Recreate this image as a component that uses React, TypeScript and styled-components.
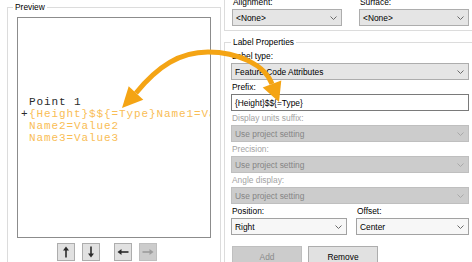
import React from 'react'
import styled, { createGlobalStyle } from 'styled-components'

const GlobalStyle = createGlobalStyle`
  html, body {
    margin: 0;
    padding: 0;
    background: #ffffff;
  }
  body {
    font-family: 'Liberation Sans', Arial, sans-serif;
    font-size: 8.4px;
    color: #000000;
  }
`

const Dialog = styled.div`
  position: relative;
  display: flex;
  width: 472px;
  height: 262px;
  overflow: hidden;
  background: #ffffff;
`

const LeftCol = styled.div`
  flex: 0 0 auto;
  padding: 7px 0 0 7px;
`

const RightCol = styled.div`
  flex: 1 1 auto;
  min-width: 0;
  margin-left: 3px;
  display: flex;
  flex-direction: column;
`

const GroupBox = styled.div`
  position: relative;
  box-sizing: border-box;
  border: 1px solid #dcdcdc;
`

const GroupTitle = styled.span<{ $left: number }>`
  position: absolute;
  top: -6px;
  left: ${p => p.$left}px;
  padding: 0 2px;
  background: #ffffff;
  line-height: 10px;
  white-space: nowrap;
`

const PreviewGroup = styled(GroupBox)`
  width: 214px;
  height: 280px;
  padding: 9px 0 0 9px;
`

const Canvas = styled.div`
  box-sizing: border-box;
  width: 194px;
  height: 221px;
  border: 1px solid #8c8c8c;
  overflow: hidden;
  padding: 78px 0 0 11px;
  font-family: 'Liberation Mono', 'DejaVu Sans Mono', monospace;
  font-size: 11px;
  letter-spacing: 0.9px;
  line-height: 12px;
  white-space: nowrap;
`

const PointName = styled.div`
  color: #2a2a2a;
`

const LabelLine = styled.div`
  color: #f9bd55;
`

const Marker = styled.span`
  display: inline-block;
  width: 8px;
  margin-left: -8px;
  color: #2a2a2a;
`

const NudgeRow = styled.div`
  display: flex;
  gap: 14px;
  margin: 5px 0 0 40px;
`

const NudgePair = styled.div`
  display: flex;
  gap: 7px;
`

const NudgeButton = styled.div<{ $disabled?: boolean }>`
  box-sizing: border-box;
  width: 18px;
  height: 18px;
  display: flex;
  align-items: center;
  justify-content: center;
  background: ${p => (p.$disabled ? '#cccccc' : '#e1e1e1')};
  border: 1px solid ${p => (p.$disabled ? '#bfbfbf' : '#adadad')};
  color: ${p => (p.$disabled ? '#9c9c9c' : '#2b2b2b')};
`

const UpperGroup = styled(GroupBox)`
  margin: -6px -10px 0 0;
  padding: 0 0 4px 7px;
`

const PropsGroup = styled(GroupBox)`
  flex: 1 1 auto;
  margin: 11px -10px -20px 0;
  padding: 6px 0 0 6px;
`

const FieldRow = styled.div<{ $gap: number }>`
  display: flex;
  gap: ${p => p.$gap}px;
`

const Field = styled.div<{ $width: number }>`
  display: flex;
  flex-direction: column;
  width: ${p => p.$width}px;
`

const FieldLabel = styled.div<{ $disabled?: boolean }>`
  height: 14px;
  line-height: 14px;
  padding-left: 1px;
  white-space: nowrap;
  color: ${p => (p.$disabled ? '#a3a3a3' : '#000000')};
`

type ComboKind = 'list' | 'edit' | 'disabled'

const comboBg: Record<ComboKind, string> = {
  list: '#e5e5e5',
  edit: '#f7f7f7',
  disabled: '#cccccc',
}

const comboBorder: Record<ComboKind, string> = {
  list: '#adadad',
  edit: '#a2a2a2',
  disabled: '#bfbfbf',
}

const ComboBox = styled.div<{ $kind: ComboKind }>`
  box-sizing: border-box;
  height: 17px;
  display: flex;
  align-items: center;
  justify-content: space-between;
  padding: 0 4px 0 3px;
  background: ${p => comboBg[p.$kind]};
  border: 1px solid ${p => comboBorder[p.$kind]};
  color: ${p => (p.$kind === 'disabled' ? '#858585' : '#000000')};
  white-space: nowrap;
`

const Chevron = styled.svg<{ $disabled?: boolean }>`
  flex: 0 0 auto;
  color: ${p => (p.$disabled ? '#a9a9a9' : '#6a6a6a')};
`

const TextBox = styled.div`
  box-sizing: border-box;
  height: 17px;
  display: flex;
  align-items: center;
  padding: 0 3px;
  background: #ffffff;
  border: 1px solid #7a7a7a;
  white-space: nowrap;
`

const ButtonRow = styled.div`
  display: flex;
  gap: 6px;
  margin: 11px 0 0 1px;
`

const PushButton = styled.div<{ $disabled?: boolean }>`
  box-sizing: border-box;
  width: 70px;
  height: 21px;
  display: flex;
  align-items: center;
  justify-content: center;
  background: ${p => (p.$disabled ? '#cccccc' : '#e1e1e1')};
  border: 1px solid ${p => (p.$disabled ? '#bfbfbf' : '#adadad')};
  color: ${p => (p.$disabled ? '#8a8a8a' : '#000000')};
`

const Overlay = styled.svg`
  position: absolute;
  top: 0;
  left: 0;
  pointer-events: none;
`

const Combo = (props: { value: string; kind?: ComboKind }) => {
  const kind = props.kind || 'list'
  return (
    <ComboBox $kind={kind}>
      <span>{props.value}</span>
      <Chevron $disabled={kind === 'disabled'} width="7" height="4" viewBox="0 0 7 4">
        <polyline points="0.5,0.5 3.5,3.5 6.5,0.5" fill="none" stroke="currentColor" strokeWidth="1" />
      </Chevron>
    </ComboBox>
  )
}

const ArrowIcon = (props: { dir: 'up' | 'down' | 'left' | 'right' }) => {
  const rotate = { up: 0, right: 90, down: 180, left: 270 }[props.dir]
  return (
    <svg width="12" height="12" viewBox="0 0 12 12">
      <g transform={`rotate(${rotate} 6 6)`}>
        <line x1="6" y1="3" x2="6" y2="11.5" stroke="currentColor" strokeWidth="1.6" />
        <polygon points="3,4.5 6,0.5 9,4.5" fill="currentColor" />
      </g>
    </svg>
  )
}

const App = () => {
  return (
    <Dialog>
      <GlobalStyle />
      <LeftCol>
        <PreviewGroup>
          <GroupTitle $left={5}>Preview</GroupTitle>
          <Canvas>
            <PointName>Point 1</PointName>
            <LabelLine>
              <Marker>+</Marker>
              {'{Height}$${=Type}Name1=Value1'}
            </LabelLine>
            <LabelLine>Name2=Value2</LabelLine>
            <LabelLine>Name3=Value3</LabelLine>
          </Canvas>
          <NudgeRow>
            <NudgePair>
              <NudgeButton>
                <ArrowIcon dir="up" />
              </NudgeButton>
              <NudgeButton>
                <ArrowIcon dir="down" />
              </NudgeButton>
            </NudgePair>
            <NudgePair>
              <NudgeButton>
                <ArrowIcon dir="left" />
              </NudgeButton>
              <NudgeButton $disabled>
                <ArrowIcon dir="right" />
              </NudgeButton>
            </NudgePair>
          </NudgeRow>
        </PreviewGroup>
      </LeftCol>

      <RightCol>
        <UpperGroup>
          <FieldRow $gap={17}>
            <Field $width={110}>
              <FieldLabel>Alignment:</FieldLabel>
              <Combo value="<None>" />
            </Field>
            <Field $width={110}>
              <FieldLabel>Surface:</FieldLabel>
              <Combo value="<None>" />
            </Field>
          </FieldRow>
        </UpperGroup>

        <PropsGroup>
          <GroupTitle $left={6}>Label Properties</GroupTitle>
          <Field $width={238}>
            <FieldLabel>Label type:</FieldLabel>
            <Combo value="Feature Code Attributes" />
          </Field>
          <Field $width={238}>
            <FieldLabel>Prefix:</FieldLabel>
            <TextBox>{'{Height}$${=Type}'}</TextBox>
          </Field>
          <Field $width={238}>
            <FieldLabel $disabled>Display units suffix:</FieldLabel>
            <Combo value="Use project setting" kind="disabled" />
          </Field>
          <Field $width={238}>
            <FieldLabel $disabled>Precision:</FieldLabel>
            <Combo value="Use project setting" kind="disabled" />
          </Field>
          <Field $width={238}>
            <FieldLabel $disabled>Angle display:</FieldLabel>
            <Combo value="Use project setting" kind="disabled" />
          </Field>
          <FieldRow $gap={9}>
            <Field $width={116}>
              <FieldLabel>Position:</FieldLabel>
              <Combo value="Right" kind="edit" />
            </Field>
            <Field $width={113}>
              <FieldLabel>Offset:</FieldLabel>
              <Combo value="Center" kind="edit" />
            </Field>
          </FieldRow>
          <ButtonRow>
            <PushButton $disabled>Add</PushButton>
            <PushButton>Remove</PushButton>
          </ButtonRow>
        </PropsGroup>
      </RightCol>

      <Overlay width="472" height="262" viewBox="0 0 472 262">
        <path
          d="M 136 93 C 158 66, 180 52, 208 52 C 238 52, 265 65, 272 84"
          fill="none"
          stroke="#f4a414"
          strokeWidth="5"
        />
        <polygon points="122,108 143.3,99.8 128.7,86.2" fill="#f4a414" />
        <polygon points="279,102 281.3,80.4 262.7,87.6" fill="#f4a414" />
      </Overlay>
    </Dialog>
  )
}

export default App
